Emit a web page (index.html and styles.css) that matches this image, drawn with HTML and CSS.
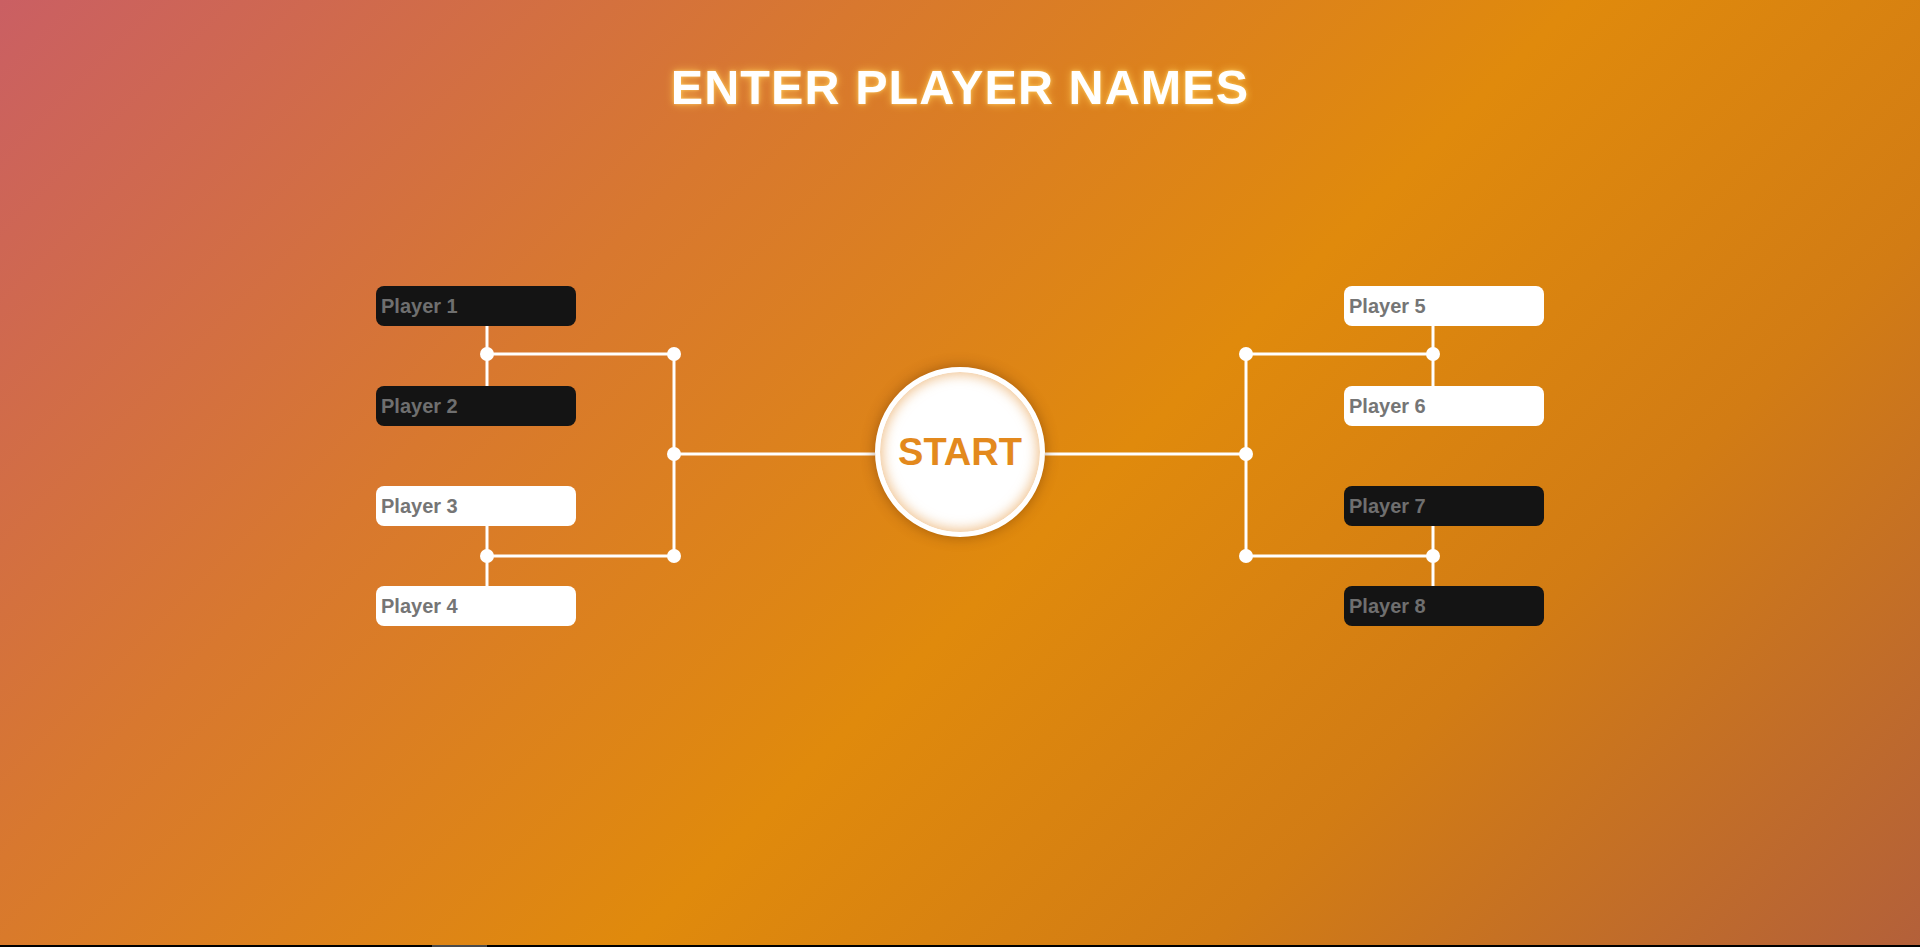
FILE: index.html
```html
<!DOCTYPE html>
<html lang="en">
<head>
<meta charset="utf-8">
<title>Enter Player Names</title>
<link rel="stylesheet" href="styles.css">
</head>
<body>
<main class="page">
  <h1 class="title">ENTER PLAYER NAMES</h1>
  <section class="bracket">
    <div class="half half-left">
      <div class="slots">
        <input class="slot slot-dark" type="text" placeholder="Player 1">
        <input class="slot slot-dark" type="text" placeholder="Player 2">
        <input class="slot slot-light" type="text" placeholder="Player 3">
        <input class="slot slot-light" type="text" placeholder="Player 4">
      </div>
      <svg class="lines" width="499" height="340" viewBox="0 0 499 340" aria-hidden="true">
        <g stroke="#fff" stroke-width="3" fill="none">
          <line x1="111" y1="40" x2="111" y2="100"/>
          <line x1="111" y1="68" x2="298" y2="68"/>
          <line x1="298" y1="68" x2="298" y2="270"/>
          <line x1="111" y1="226" x2="111" y2="300"/>
          <line x1="111" y1="270" x2="298" y2="270"/>
          <line x1="298" y1="168" x2="499" y2="168"/>
        </g>
        <g fill="#fff">
          <circle cx="111" cy="68" r="7"/>
          <circle cx="298" cy="68" r="7"/>
          <circle cx="298" cy="168" r="7"/>
          <circle cx="111" cy="270" r="7"/>
          <circle cx="298" cy="270" r="7"/>
        </g>
      </svg>
    </div>
    <button class="start" type="button">START</button>
    <div class="half half-right">
      <div class="slots">
        <input class="slot slot-light" type="text" placeholder="Player 5">
        <input class="slot slot-light" type="text" placeholder="Player 6">
        <input class="slot slot-dark" type="text" placeholder="Player 7">
        <input class="slot slot-dark" type="text" placeholder="Player 8">
      </div>
      <svg class="lines" width="499" height="340" viewBox="0 0 499 340" aria-hidden="true">
        <g stroke="#fff" stroke-width="3" fill="none">
          <line x1="388" y1="40" x2="388" y2="100"/>
          <line x1="388" y1="68" x2="201" y2="68"/>
          <line x1="201" y1="68" x2="201" y2="270"/>
          <line x1="388" y1="226" x2="388" y2="300"/>
          <line x1="388" y1="270" x2="201" y2="270"/>
          <line x1="201" y1="168" x2="0" y2="168"/>
        </g>
        <g fill="#fff">
          <circle cx="388" cy="68" r="7"/>
          <circle cx="201" cy="68" r="7"/>
          <circle cx="201" cy="168" r="7"/>
          <circle cx="388" cy="270" r="7"/>
          <circle cx="201" cy="270" r="7"/>
        </g>
      </svg>
    </div>
  </section>
</main>
<div class="hscroll"><div class="hscroll-thumb"></div></div>
</body>
</html>
```
FILE: styles.css
```css
html, body {
  margin: 0;
  padding: 0;
  height: 100%;
}
body {
  font-family: "Liberation Sans", Arial, sans-serif;
  background: linear-gradient(135deg, #ca5f63 0%, #d8782f 30%, #e08a0c 55%, #d27c14 75%, #b3603a 100%);
  overflow: hidden;
  min-height: 100vh;
}
.page {
  display: flex;
  flex-direction: column;
  align-items: center;
  min-height: 100vh;
}
.title {
  margin: 60px 0 0;
  font-size: 48.5px;
  line-height: 55px;
  font-weight: 700;
  letter-spacing: 1.1px;
  color: #fff;
  text-shadow: 0 0 8px rgba(255, 200, 80, 0.9), 0 0 3px rgba(255, 210, 120, 0.8);
}
.bracket {
  margin-top: 171px;
  display: flex;
  align-items: center;
}
.half {
  position: relative;
  width: 499px;
  height: 340px;
}
.slots {
  display: flex;
  flex-direction: column;
  gap: 60px;
  width: 200px;
}
.half-right .slots {
  margin-left: auto;
}
.lines {
  position: absolute;
  left: 0;
  top: 0;
  pointer-events: none;
}
.slot {
  box-sizing: border-box;
  width: 200px;
  height: 40px;
  border: none;
  border-radius: 8px;
  padding: 0 5px;
  outline: none;
  font-family: "Liberation Sans", Arial, sans-serif;
  font-size: 20px;
  font-weight: 700;
  position: relative;
  z-index: 1;
}
.slot-dark {
  background: #141414;
  color: #eee;
}
.slot-light {
  background: #fff;
  color: #333;
}
.slot::placeholder {
  color: #757575;
  opacity: 1;
}
.slot-dark::placeholder {
  color: #6f6f6f;
}
.start {
  box-sizing: border-box;
  width: 170px;
  height: 170px;
  margin-bottom: 8px;
  border-radius: 50%;
  border: 5px solid #fff;
  background: #fff;
  box-shadow: inset 0 0 12px 3px rgba(232, 160, 80, 0.6), 0 0 14px rgba(90, 40, 0, 0.45);
  color: #e3891d;
  font-family: "Liberation Sans", Arial, sans-serif;
  font-size: 38px;
  font-weight: 700;
  padding: 0;
  cursor: pointer;
  position: relative;
  z-index: 2;
}
.hscroll {
  position: fixed;
  left: 0;
  right: 0;
  bottom: 0;
  height: 2px;
  background: #000;
}
.hscroll-thumb {
  margin-left: 432px;
  width: 55px;
  height: 100%;
  background: #4a4a4a;
}
```
